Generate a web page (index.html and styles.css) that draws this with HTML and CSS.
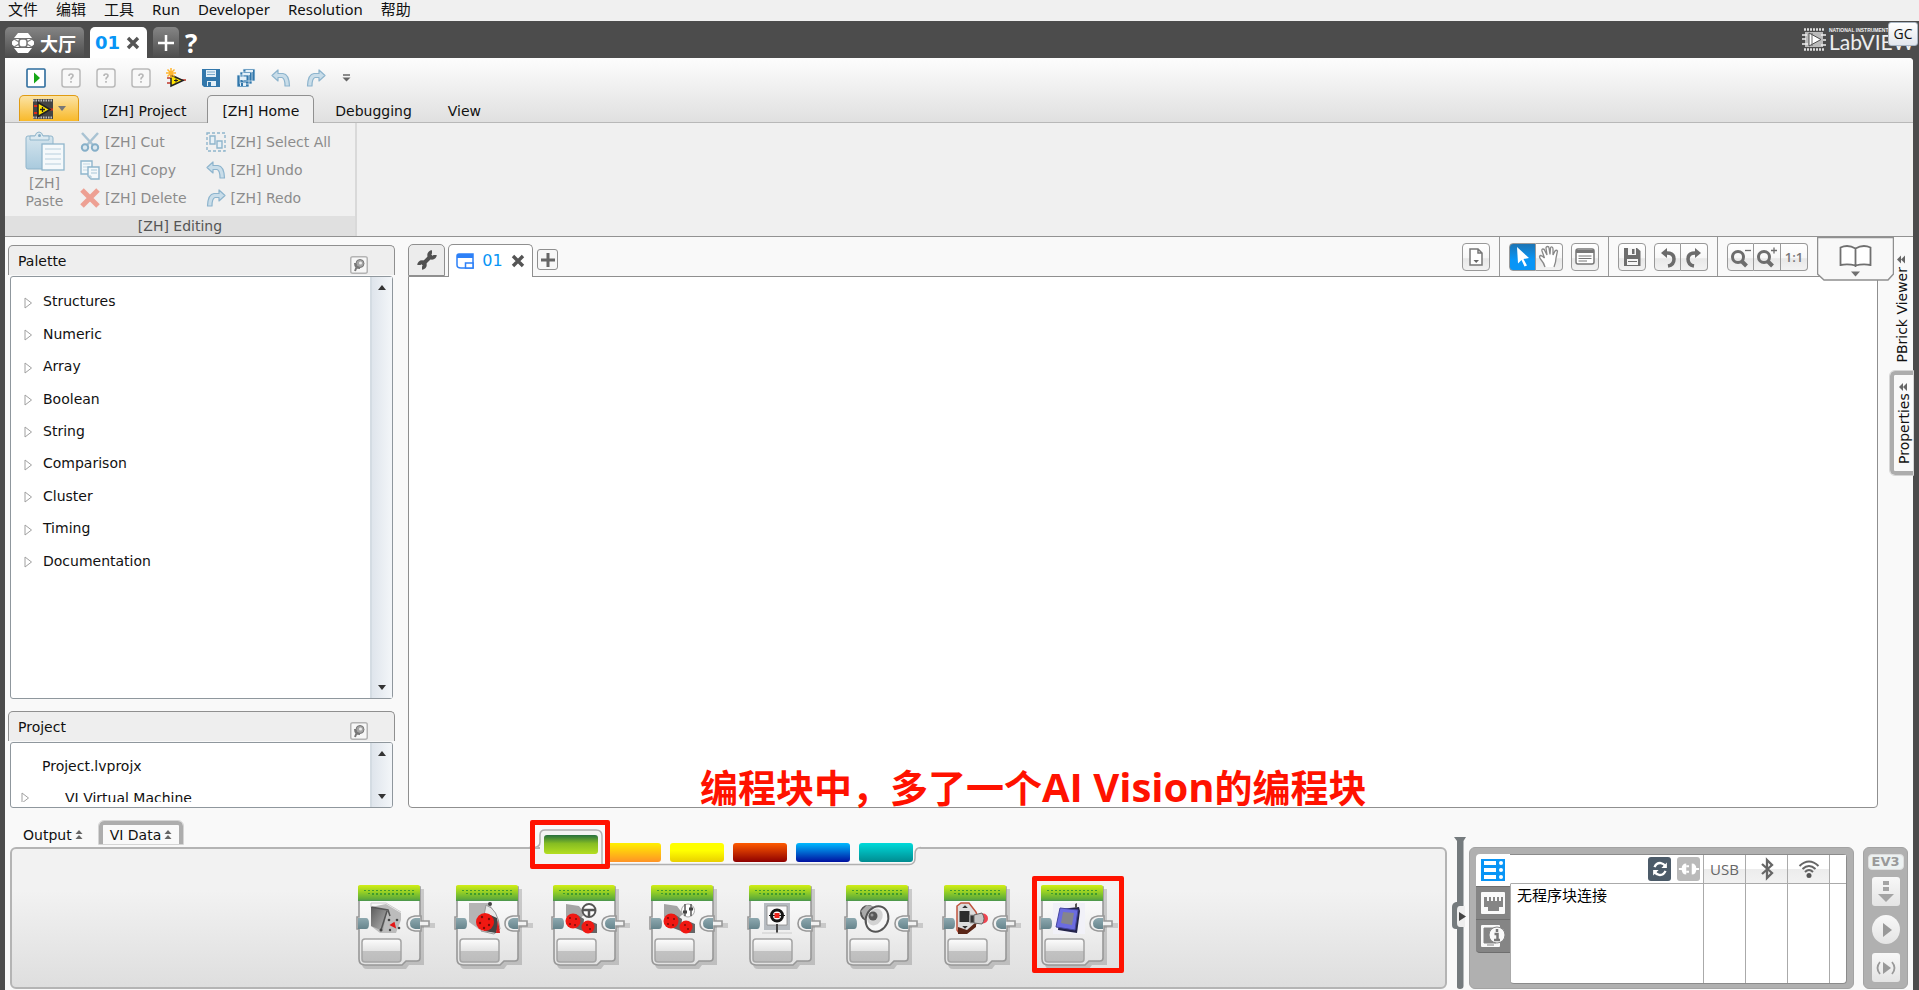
FILE: index.html
```html
<!DOCTYPE html>
<html lang="zh">
<head>
<meta charset="utf-8">
<title>LabVIEW - 01</title>
<link rel="stylesheet" href="styles.css">
</head>
<body>
<svg class="defs" aria-hidden="true">
  <defs>
    <linearGradient id="gTop" x1="0" y1="0" x2="0" y2="1"><stop offset="0" stop-color="#d3ee14"/><stop offset=".5" stop-color="#8dcb28"/><stop offset=".85" stop-color="#62ad38"/><stop offset="1" stop-color="#4a9550"/></linearGradient>
    <linearGradient id="gBody" x1="0" y1="0" x2="0" y2="1"><stop offset="0" stop-color="#fff"/><stop offset="1" stop-color="#e2e2e2"/></linearGradient>
    <linearGradient id="gSlot" x1="0" y1="0" x2="0" y2="1"><stop offset="0" stop-color="#fdfdfd"/><stop offset=".5" stop-color="#e4e4e4"/><stop offset=".52" stop-color="#c2c2c2"/><stop offset="1" stop-color="#bcbcbc"/></linearGradient>
    <linearGradient id="gPlug" x1="0" y1="0" x2="0" y2="1"><stop offset="0" stop-color="#8ea9b0"/><stop offset="1" stop-color="#66848c"/></linearGradient>
    <linearGradient id="gMetal" x1="0" y1="0" x2="1" y2="1"><stop offset="0" stop-color="#5c5c5c"/><stop offset="1" stop-color="#b5b5b5"/></linearGradient>
    <linearGradient id="gBlue" x1="0" y1="0" x2="0" y2="1"><stop offset="0" stop-color="#d5e5ee"/><stop offset="1" stop-color="#a9cadd"/></linearGradient>
    <pattern id="dots" width="4" height="4" patternUnits="userSpaceOnUse"><rect width="2" height="2" fill="#3f9b2c"/></pattern>
    <symbol id="block" viewBox="0 0 80 86">
      <path d="M6 4H68V80H53L50 84H11Q6 84 6 78Z" fill="#000" opacity=".16"/>
      <path d="M3 2H64V73Q64 76 61 76H50L46 80H9Q3 80 3 74V44H1V32H3Z" fill="url(#gBody)" stroke="#989898" stroke-width="1.600"/>
      <path d="M2 2Q2 0 4 0H62Q64 0 64 2V16H2Z" fill="url(#gTop)"/>
      <path d="M8 5h52v6H16V9h-4V7H8z" fill="url(#dots)"/>
      <path d="M2 33H10Q13 33 13 38.500T10 44H2Z" fill="url(#gPlug)"/>
      <path d="M53 38h26v5H53z" fill="#000" opacity=".14"/>
      <path d="M59 31H65V36H73V41H65V46H59Q51 45 51 38.500T59 31Z" fill="#f2f2f2" stroke="#989898" stroke-width="1.600"/>
      <path d="M64 33H59Q54 34 54 38.500T59 44H64Z" fill="url(#gPlug)"/>
      <rect x="6" y="54" width="39" height="23" rx="3" fill="url(#gSlot)" stroke="#a4a4a4" stroke-width="1.500"/>
    </symbol>
    <symbol id="undo" viewBox="0 0 20 20"><path d="M1 7.500L7 2V5.500H12Q18 6 18.500 18H14Q14 10.500 11 9.500H7V13Z" fill="#c9dde9" stroke="#8db4cd" stroke-width="1.200" stroke-linejoin="round"/></symbol>
    <symbol id="mystery" viewBox="0 0 20 20"><rect x="1" y="1" width="18" height="18" rx="2.500" fill="#f8f8f8" stroke="#b9b9b9" stroke-width="1.500"/><path d="M8 8q0-2 2-2t2 1.700q0 1-1.200 1.800Q10 10 10 11.500M10 13v1.800" fill="none" stroke="#b8b8b8" stroke-width="1.700"/></symbol>
    <symbol id="cross" viewBox="0 0 14 14"><path d="M2 2L12 12M12 2L2 12" fill="none" stroke="currentColor" stroke-width="3.400"/></symbol>
    <symbol id="pin" viewBox="0 0 18 18"><rect x=".75" y=".75" width="16.500" height="16.500" rx="2" fill="#f7f7f7" stroke="#b4b4b4" stroke-width="1.500"/><circle cx="10" cy="7.500" r="4" fill="#a5a5a5" stroke="#777"/><circle cx="10.500" cy="7" r="1.500" fill="#eee"/><path d="M5 7Q5 12 10 12M7 10L5 15" fill="none" stroke="#777" stroke-width="2"/></symbol>
    <symbol id="branch" viewBox="0 0 9 12"><path d="M1 1L7.500 6L1 11Z" fill="#fff" stroke="#a0a0a0"/></symbol>
    <symbol id="stack" viewBox="0 0 8 10"><path d="M4 0L7.500 4H.5ZM4 5L7.500 9H.5Z" fill="#666"/></symbol>
    <symbol id="turn" viewBox="0 0 26 26"><path d="M10 9H12Q19 9 19 15T13 22" fill="none" stroke="#6b6b6b" stroke-width="3.500"/><path d="M6 9L12 4V14Z" fill="#6b6b6b"/></symbol>
    <symbol id="lens" viewBox="0 0 26 26"><circle cx="10" cy="13" r="5.500" fill="none" stroke="#6d6d6d" stroke-width="3"/><path d="M13.500 17L18.500 22" stroke="#6d6d6d" stroke-width="4"/></symbol>
    <symbol id="vi" viewBox="0 0 20 20"><path d="M1 7H6M1 14H6M13 10.500H20" stroke="#e02d16" stroke-width="2"/><path d="M5 3.500L17 10.500L5 17.500Z" fill="#ffe400" stroke="#222" stroke-width="1.600"/><path d="M7 10.500H12M9.500 8V13" stroke="#222" stroke-width="1.300"/></symbol>
  </defs>
</svg>

<nav class="menubar">
  <button>文件</button><button>编辑</button><button>工具</button><button>Run</button><button>Developer</button><button>Resolution</button><button>帮助</button>
</nav>

<header class="titlebar">
  <button class="doc lobby"><svg width="22" height="20" viewBox="0 0 22 20"><path d="M6 0H16L20 5H2ZM6 20H16L20 15H2ZM0 8.500L3 6H19L22 8.500V11.500L19 14H3L0 11.500Z" fill="#fff"/><path d="M2 6L7 9M20 6L15 9M2 14L7 11M20 14L15 11" stroke="#808080" stroke-width="1.200"/><rect x="7" y="6" width="8" height="8" rx="2.500" fill="#fff" stroke="#777" stroke-width="1.500"/></svg>大厅</button>
  <button class="doc current">01<svg width="14" height="14"><use href="#cross"/></svg></button>
  <button class="doc add" aria-label="New"><svg width="16" height="16" viewBox="0 0 16 16"><path d="M8 0V16M0 8H16" stroke="#fff" stroke-width="2.500"/></svg></button>
  <button class="help">?</button>
  <div class="brand">
    <svg width="24" height="23" viewBox="0 0 24 23"><path d="M2 1.500H22M2 21.500H22" stroke="#ddd" stroke-width="2.500" stroke-dasharray="2 1"/><rect x="3" y="4" width="18" height="15" fill="#bbb"/><path d="M0 7H5M0 11H4M0 16H6M19 7H24M21 12H24M19 17H24" stroke="#eee" stroke-width="1.500"/><path d="M7 5L19 11.500L7 18Z" fill="#fff" stroke="#4c4c4c"/><path d="M10 5V18" stroke="#666"/></svg>
    <div class="brand-text"><small>NATIONAL INSTRUMENTS</small><span>LabVIEW</span></div>
    <button class="gc">GC</button>
  </div>
</header>

<div class="frame">
  <div class="ribbon-top">
    <div class="quick">
      <button aria-label="Run"><svg viewBox="0 0 20 20"><rect x="1" y="1" width="18" height="18" rx="1" fill="#fff" stroke="#2d6c9d" stroke-width="1.600"/><path d="M8 4.500L14 10L8 15.500Z" fill="#16a716"/></svg></button>
      <button aria-label="Item 1"><svg><use href="#mystery"/></svg></button>
      <button aria-label="Item 2"><svg><use href="#mystery"/></svg></button>
      <button aria-label="Item 3"><svg><use href="#mystery"/></svg></button>
      <button aria-label="New VI"><svg viewBox="0 0 20 20"><path d="M1 10H5M1 15H5M14 12H20" stroke="#c0392b" stroke-width="1.500"/><path d="M5 7L17 12.500L5 18Z" fill="#ffe400" stroke="#222" stroke-width="1.500"/><path d="M8 12.500H12M10 10.500V14.500" stroke="#222"/><path d="M5 0V10M0 5H10M1.500 1.500L8.500 8.500M8.500 1.500L1.500 8.500" stroke="#ffb52e" stroke-width="1.500"/></svg></button>
      <button aria-label="Save"><svg viewBox="0 0 20 20"><path d="M1 1H19V19H3L1 17Z" fill="#3277ab"/><path d="M5 2H15V9H5ZM6 13H15V18H6Z" fill="#e4f0f8"/><path d="M6 4H14M6 6.500H14" stroke="#78a8cb"/><rect x="7" y="14" width="3" height="4" fill="#3277ab"/></svg></button>
      <button aria-label="Save All"><svg viewBox="0 0 20 20"><path d="M7 1H19V13H7ZM4 4H16V16H4ZM1 7H13V19H1Z" fill="#3277ab" stroke="#e6f0f7" stroke-width=".7"/><path d="M9.500 2H17V4H9.500ZM6.500 5H14V7H6.500ZM4 8.500H10.500V12H4ZM4 14.500H10V18H4Z" fill="#e4f0f8"/><path d="M5 15H7V18H5Z" fill="#3277ab"/></svg></button>
      <button aria-label="Undo"><svg><use href="#undo"/></svg></button>
      <button aria-label="Redo"><svg class="flip"><use href="#undo"/></svg></button>
      <button aria-label="More"><svg viewBox="0 0 20 20"><path d="M2 7H9" stroke="#666" stroke-width="1.500"/><path d="M1.500 9.500H9.500L5.500 13.500Z" fill="#666"/></svg></button>
    </div>
    <nav class="ribbon-tabs">
      <button class="app" aria-label="Application"><svg width="20" height="20" viewBox="0 0 20 20"><rect width="20" height="20" fill="#444"/><path d="M0 1.500H20M0 18.500H20" stroke="#bbb" stroke-width="2" stroke-dasharray="1.500 1"/><use href="#vi"/></svg><svg width="8" height="5"><path d="M0 0H8L4 5Z" fill="#777"/></svg></button>
      <button>[ZH] Project</button><button class="on">[ZH] Home</button><button>Debugging</button><button>View</button>
    </nav>
  </div>

  <section class="ribbon">
    <div class="group">
      <div class="group-body">
        <button class="paste"><svg width="40" height="40" viewBox="0 0 40 40"><rect x="1" y="5" width="27" height="33" rx="2" fill="url(#gBlue)" stroke="#90b5cb"/><path d="M5 9V5H10Q11 1 14 1T18 5H24V9Z" fill="#dce9f0" stroke="#90b5cb"/><circle cx="14.500" cy="4.500" r="1.500" fill="#86aec6"/><rect x="17" y="13" width="22" height="26" fill="#f5f9fb" stroke="#90b5cb" stroke-width="1.300"/><path d="M20 18H36M20 23H36M20 28H36M20 33H36" stroke="#b8cfdd"/></svg><span>[ZH]<br>Paste</span></button>
        <div class="col">
          <button><svg viewBox="0 0 20 20"><path d="M2 1L13 13M18 1L7 13" stroke="#a9c3d3" stroke-width="2.500"/><circle cx="5" cy="15.500" r="3.200" fill="#dce8ef" stroke="#86afc8" stroke-width="2"/><circle cx="15" cy="15.500" r="3.200" fill="#dce8ef" stroke="#86afc8" stroke-width="2"/></svg>[ZH] Cut</button>
          <button><svg viewBox="0 0 20 20"><path d="M1 1H12V14H1Z" fill="#f3f8fa" stroke="#8fb5cc" stroke-width="1.400"/><path d="M3 4H10M3 7H10M3 10H10" stroke="#c1d5e1"/><path d="M8 7H19V19H11L8 16Z" fill="#f3f8fa" stroke="#8fb5cc" stroke-width="1.400"/><path d="M8 16H11V19M11 10H17M11 13H17" fill="none" stroke="#a8c6d7"/></svg>[ZH] Copy</button>
          <button><svg viewBox="0 0 20 20"><path d="M2 2L18 18M18 2L2 18" stroke="#eda093" stroke-width="5"/></svg>[ZH] Delete</button>
        </div>
        <div class="col">
          <button><svg viewBox="0 0 20 20"><rect x="1" y="1" width="18" height="18" fill="none" stroke="#8fb5cc" stroke-width="1.400" stroke-dasharray="3 2"/><path d="M4 4H9V12H4ZM11 9H16V16H11Z" fill="#e8f1f6" stroke="#8fb5cc" stroke-width="1.400"/></svg>[ZH] Select All</button>
          <button><svg><use href="#undo"/></svg>[ZH] Undo</button>
          <button><svg class="flip"><use href="#undo"/></svg>[ZH] Redo</button>
        </div>
      </div>
      <div class="group-title">[ZH] Editing</div>
    </div>
  </section>

  <main class="work">
    <aside class="left">
      <section class="panel grow">
        <h2>Palette<button aria-label="Pin Palette"><svg width="18" height="18"><use href="#pin"/></svg></button></h2>
        <div class="panel-body">
          <ul class="tree">
            <li><svg><use href="#branch"/></svg>Structures</li><li><svg><use href="#branch"/></svg>Numeric</li><li><svg><use href="#branch"/></svg>Array</li><li><svg><use href="#branch"/></svg>Boolean</li><li><svg><use href="#branch"/></svg>String</li><li><svg><use href="#branch"/></svg>Comparison</li><li><svg><use href="#branch"/></svg>Cluster</li><li><svg><use href="#branch"/></svg>Timing</li><li><svg><use href="#branch"/></svg>Documentation</li>
          </ul>
          <div class="scroll"><button aria-label="Scroll up"><svg width="8" height="5"><path d="M4 0L8 5H0Z" fill="#333"/></svg></button><button aria-label="Scroll down"><svg width="8" height="5"><path d="M0 0H8L4 5Z" fill="#333"/></svg></button></div>
        </div>
      </section>
      <section class="panel">
        <h2>Project<button aria-label="Pin Project"><svg width="18" height="18"><use href="#pin"/></svg></button></h2>
        <div class="panel-body short">
          <div class="project"><p>Project.lvprojx</p><p class="vm"><svg><use href="#branch"/></svg>VI Virtual Machine</p></div>
          <div class="scroll"><button aria-label="Scroll up"><svg width="8" height="5"><path d="M4 0L8 5H0Z" fill="#333"/></svg></button><button aria-label="Scroll down"><svg width="8" height="5"><path d="M0 0H8L4 5Z" fill="#333"/></svg></button></div>
        </div>
      </section>
    </aside>

    <section class="editor">
      <div class="editor-bar">
        <button class="wrench" aria-label="Settings"><svg width="20" height="20" viewBox="0 0 20 20"><path d="M5 15L15 5" stroke="#505050" stroke-width="4"/><path d="M18 5A3 3 0 1 1 15 2M2 15A3 3 0 1 1 5 18" fill="none" stroke="#505050" stroke-width="3.500"/></svg></button>
        <button class="file"><svg width="18" height="17" viewBox="0 0 18 17"><path d="M1 3Q1 1 3 1H17V15H5Q1 15 1 12Z" fill="#fff" stroke="#2d80f7" stroke-width="1.500"/><path d="M1 1H17V5H1Z" fill="#2d80f7"/><rect x="9.500" y="10" width="7.500" height="5" fill="#fff" stroke="#2d80f7" stroke-width="1.500"/></svg>01<svg class="x" width="14" height="14"><use href="#cross"/></svg></button>
        <button class="plus" aria-label="New tab"><svg width="14" height="14" viewBox="0 0 14 14"><path d="M7 0V14M0 7H14" stroke="#666" stroke-width="3"/></svg></button>
        <div class="tools">
          <div class="cell"><button aria-label="Document"><svg viewBox="0 0 26 26"><path d="M7 5H15L19 9V21H7ZM15 5V9H19" fill="#fff" stroke="#777" stroke-width="1.500"/><path d="M10.500 16H16L13.200 19Z" fill="#666"/></svg></button></div>
          <div class="cell">
            <div class="seg"><button class="active" aria-label="Select"><svg viewBox="0 0 26 26"><path d="M7 3L19 14L13.500 15L17 21.500L14.500 22.500L11.500 16L8 19.500Z" fill="#fff"/></svg></button><button aria-label="Pan"><svg viewBox="0 0 26 26"><path d="M9 23Q8 19 4.500 15Q2.500 12 4.500 11.500Q6 11.500 8.500 14L6 7Q5.500 5 7 5T9 7L11 11L10 4Q10 2.500 11.500 2.500T13 4L14 10.500L14.500 4Q15 2.500 16 3T17 5L17 11L19 7Q20.500 5.500 21.500 7L20 14Q20 18 18 23" fill="#fff" stroke="#888" stroke-width="1.300"/></svg></button></div>
            <button aria-label="Comment"><svg viewBox="0 0 26 26"><rect x="4" y="5" width="18" height="15" rx="2" fill="#fff" stroke="#777" stroke-width="1.500"/><path d="M4 7.500H22" stroke="#777" stroke-width="3"/><path d="M6.500 12H19.500M6.500 14.500H19.500M6.500 17H15" stroke="#777"/></svg></button>
          </div>
          <div class="cell">
            <button aria-label="Save"><svg viewBox="0 0 26 26"><path d="M5 4H18L21.500 7V22H5Z" fill="#6d6d6d"/><path d="M9 4H17V11H9ZM8 15H19V21H8Z" fill="#f5f5f5"/><path d="M13 5H15.500V10H13ZM9 17H18V18H9Z" fill="#6d6d6d"/></svg></button>
            <div class="seg"><button aria-label="Undo"><svg><use href="#turn"/></svg></button><button aria-label="Redo"><svg class="flip"><use href="#turn"/></svg></button></div>
          </div>
          <div class="cell">
            <div class="seg"><button aria-label="Zoom out"><svg viewBox="0 0 26 26"><use href="#lens"/><path d="M17 6.500H23" stroke="#6d6d6d" stroke-width="1.300"/></svg></button><button aria-label="Zoom in"><svg viewBox="0 0 26 26"><use href="#lens"/><path d="M17 6.500H23M20 3.500V9.500" stroke="#6d6d6d" stroke-width="1.300"/></svg></button><button class="one">1:1</button></div>
          </div>
          <button class="book" aria-label="Content editor"><svg width="77" height="44" viewBox="0 0 77 44"><path d="M.5 .5H76.500V37L71 43H7L.5 37Z" fill="#f8f8f8" stroke="#8f8f8f" stroke-width="1.500"/><path d="M38.500 11.500Q31 7 23.500 10.500V28Q31 26.500 38.500 28.500Q46 26.500 53.500 28V10.500Q46 7 38.500 11.500ZM38.500 11.500V30" fill="#fff" stroke="#707070" stroke-width="1.800"/><path d="M34 34.500H43L38.500 39.500Z" fill="#707070"/></svg></button>
        </div>
      </div>
      <div class="canvas"><p class="note">编程块中，多了一个<span>AI Vision</span>的编程块</p></div>
    </section>

    <nav class="side">
      <button>PBrick Viewer<svg width="8" height="10"><path d="M0 1L4 5L0 9ZM4 1L8 5L4 9Z" fill="#666"/></svg></button>
      <button class="boxed">Properties<svg width="8" height="10"><path d="M0 1L4 5L0 9ZM4 1L8 5L4 9Z" fill="#666"/></svg></button>
    </nav>
  </main>

  <footer class="bottom">
    <div class="programming">
      <nav class="dock"><button>Output<svg width="8" height="10"><use href="#stack"/></svg></button><button class="boxed">VI Data<svg width="8" height="10"><use href="#stack"/></svg></button></nav>
      <section class="blocks">
        <nav class="categories">
          <svg class="outline" width="392" height="38" viewBox="0 0 392 38"><path d="M0 19H7Q11 18 11 13V6Q11 1 16 1H67Q73 1 73 7V36H380Q386 36 386 29V25Q387 19 392 19V17H386V0H0Z" fill="#f9f9f9"/><path d="M11 14V6Q11 1 16 1H67Q73 1 73 7V36H11Z" fill="#f4f4f4"/><path d="M0 18.500H5Q11 18 11 13V6Q11 1 16 1H67Q73 1 73 7V35.500H380Q386 35.500 386 29V25Q386 18.500 392 18.500" fill="none" stroke="#b0b0b0" stroke-width="1.500"/></svg>
          <button class="green" aria-label="Action"></button><button class="orange" aria-label="Flow"></button><button class="yellow" aria-label="Sensor"></button><button class="red" aria-label="Data"></button><button class="blue" aria-label="Advanced"></button><button class="teal" aria-label="My blocks"></button>
          <span class="mark"></span>
        </nav>
        <ul class="shelf">
          <li><svg viewBox="0 0 80 86"><use href="#block"/><path d="M15 22L30 19L45 28V35L40 48H24L15 41Z" fill="#bcbcbc"/><path d="M15 22L31 25L27 46L15 41Z" fill="url(#gMetal)"/><path d="M15 22L32 25L34 31M31 26L25 45" fill="none" stroke="#555" stroke-width="1.500"/><path d="M15 22V18H30L45 27" fill="none" stroke="#ccc"/><path d="M35 40L39 42L38 38Z" fill="#e31616" stroke="#e31616" stroke-width="1.500"/><g fill="#444"><circle cx="33" cy="35" r="1.300"/><circle cx="41" cy="35" r="1.300"/><circle cx="43" cy="43" r="1.300"/><circle cx="25" cy="45" r="1.500"/><circle cx="34" cy="45" r="1.200"/></g></svg></li>
          <li><svg viewBox="0 0 80 86"><use href="#block"/><path d="M15 18H35L41 28L26 45L15 37Z" fill="#b5b5b5"/><path d="M32 20Q44 24 46 44L40 49L27 46Z" fill="#e8e8e8" stroke="#999"/><path d="M34 29L43 33Q45 41 42 48L30 46Z" fill="#444"/><path d="M44 35L46 48H42Z" fill="#d52020"/><circle cx="31" cy="37" r="9" fill="#f01812"/><circle cx="36" cy="19" r="2" fill="#444"/><g fill="#7a0d0a"><circle cx="28" cy="32" r="1.200"/><circle cx="35" cy="34" r="1.200"/><circle cx="26" cy="38" r="1.200"/><circle cx="30" cy="43" r="1.200"/><circle cx="35" cy="40" r="1.200"/></g></svg></li>
          <li><svg viewBox="0 0 80 86"><use href="#block"/><path d="M15 19L28 21L34 29L24 38L15 32Z" fill="#a5a5a5"/><path d="M25 29L33 34L32 46L24 43ZM39 36L46 39V48H38Z" fill="#666"/><circle cx="22" cy="36" r="7.500" fill="#f01812"/><circle cx="37" cy="42" r="6.500" fill="#f01812"/><g fill="#7a0d0a"><circle cx="19" cy="33" r="1"/><circle cx="25" cy="34" r="1"/><circle cx="19" cy="39" r="1"/><circle cx="24" cy="40" r="1"/><circle cx="36" cy="40" r="1"/><circle cx="39" cy="44" r="1"/></g><circle cx="38" cy="25.500" r="6.500" fill="#fff" stroke="#555" stroke-width="2"/><path d="M31 25H45M38 26V32" stroke="#555" stroke-width="2.500"/></svg></li>
          <li><svg viewBox="0 0 80 86"><use href="#block"/><path d="M15 19L28 21L34 29L24 38L15 32Z" fill="#a5a5a5"/><path d="M25 29L33 34L32 46L24 43ZM39 36L46 39V48H38Z" fill="#666"/><circle cx="22" cy="36" r="7.500" fill="#f01812"/><circle cx="37" cy="42" r="6.500" fill="#f01812"/><g fill="#7a0d0a"><circle cx="19" cy="33" r="1"/><circle cx="25" cy="34" r="1"/><circle cx="19" cy="39" r="1"/><circle cx="24" cy="40" r="1"/><circle cx="36" cy="40" r="1"/><circle cx="39" cy="44" r="1"/></g><circle cx="39" cy="25.500" r="6.500" fill="#fff" stroke="#aaa"/><path d="M36 19V31M42 19V31" stroke="#555" stroke-width="1.500"/><path d="M34 27H38M40 24H44" stroke="#444" stroke-width="3"/></svg></li>
          <li><svg viewBox="0 0 80 86"><use href="#block"/><path d="M17 18H43V45H17Z" fill="#b6bbc0"/><path d="M20 21H40V40H20Z" fill="#fafafa" stroke="#888" stroke-width=".8"/><circle cx="30" cy="30.500" r="5.500" fill="#fff" stroke="#151515" stroke-width="3"/><path d="M22 30.500H38" stroke="#151515"/><rect x="27.500" y="28" width="5" height="5" fill="#ee251c"/><path d="M30 39V48" stroke="#444" stroke-width="2"/><path d="M15 48H45" stroke="#ccc"/></svg></li>
          <li><svg viewBox="0 0 80 86"><use href="#block"/><circle cx="24" cy="28" r="7" fill="#aaa" stroke="#555" stroke-width="2"/><path d="M17 26L23 20L31 22L23 39Z" fill="#aaa"/><ellipse cx="33" cy="34" rx="11" ry="13" transform="rotate(25 33 34)" fill="#f6f6f6" stroke="#555" stroke-width="2"/><ellipse cx="31" cy="32" rx="7" ry="9" transform="rotate(35 31 32)" fill="#d2d2d2"/><circle cx="29" cy="31" r="4.500" fill="#585858"/><circle cx="28" cy="30" r="1.500" fill="#999"/></svg></li>
          <li><svg viewBox="0 0 80 86"><use href="#block"/><path d="M15 21L19 18H27L34 27L36 33L33 41L24 48H17L15 45Z" fill="#ddd" stroke="#bf533d" stroke-width="1.500"/><path d="M16 42L25 45L34 37V42L25 49H16Z" fill="#5a2618"/><rect x="17.500" y="26" width="10" height="11" fill="#2c2c2c"/><path d="M28 30H34V38H28ZM20 23L23 20L26 23M20 41L23 44L26 41" fill="#333" stroke="#aaa"/><circle cx="41" cy="33.500" r="5" fill="#f04450"/><path d="M32 30L40 28Q44 34 40 39L32 38Z" fill="#c8c8c8" stroke="#666"/></svg></li>
          <li><span class="mark"></span><svg viewBox="0 0 80 86"><use href="#block"/><path d="M14 18H46V49H14Z" fill="#f1f1f8"/><path d="M21 24L40 22L41 26L38 48L19 45Z" fill="#24244a"/><path d="M21 23L39 25L36 45L17 42Z" fill="#6b6ce0" stroke="#4546a0"/><path d="M24 27L35 28L33 40L22 38Z" fill="#85858c"/><path d="M36 19L38 18V23H36Z" fill="#555"/></svg></li>
        </ul>
      </section>
    </div>

    <button class="splitter" aria-label="Collapse"><svg width="16" height="152" viewBox="0 0 16 152"><path d="M3 0H15L12.500 4V149Q12.500 152 9 152T6 149V4Z" fill="#757b7e"/><path d="M6 65H5Q1 66 1 70V88Q1 92 5 92H12V66Z" fill="#757b7e"/><path d="M14 69H9Q6 69 6 73V86Q6 90 9 90H14Z" fill="#eee"/><path d="M8 75L15 79.500L8 84Z" fill="#444"/></svg></button>

    <section class="brick">
      <nav class="brick-tabs">
        <button class="on" aria-label="Available bricks"><svg viewBox="0 0 24 24"><rect y="1" width="24" height="22" fill="#0895f6"/><g fill="#fff"><rect x="3" y="3" width="12" height="4"/><rect x="3" y="10" width="12" height="4"/><rect x="3" y="17" width="12" height="4"/><circle cx="20" cy="5" r="2"/><circle cx="20" cy="12" r="2"/><circle cx="20" cy="19" r="2"/></g></svg></button>
        <button aria-label="Port view"><svg viewBox="0 0 24 24"><rect y="1" width="24" height="22" rx="1" fill="#fafafa"/><path d="M3 6H6V10H8V6H10V10H12V6H14V10H16V6H18V10H20V6H22V16H18V20H7V16H3Z" fill="#858585"/></svg></button>
        <button aria-label="Brick information"><svg viewBox="0 0 24 24"><rect y="1" width="19" height="22" rx="1" fill="#fafafa"/><path d="M3 4H15V19H3ZM6 21H13" fill="#858585" stroke="#858585"/><circle cx="16" cy="11" r="8" fill="#fafafa" stroke="#858585"/><path d="M16 5V8M13.500 10H16.500V16M13 16H19" fill="none" stroke="#777" stroke-width="2.500"/></svg></button>
      </nav>
      <table>
        <thead><tr>
          <th class="name"><span class="acts"><button class="refresh" aria-label="Refresh"><svg viewBox="0 0 24 24"><path d="M6 10Q8 5 13 5.500Q16 6 18 9M18 14Q16 19 11 18.500Q8 18 6 15" fill="none" stroke="#fff" stroke-width="2.500"/><path d="M19.500 5V11H13.500ZM4.500 19V13H10.500Z" fill="#fff"/></svg></button><button class="connect" aria-label="Disconnect"><svg viewBox="0 0 24 24"><path d="M1 12H5M19 12H23M9 9H12M9 15H12" stroke="#fff" stroke-width="2"/><path d="M9 6V18Q4 18 4 12T9 6ZM15 6V18Q20 18 20 12T15 6Z" fill="#fff"/></svg></button></span></th>
          <th>USB</th>
          <th><svg width="14" height="24" viewBox="0 0 14 24"><path d="M2 7L12 16L7 21V3L12 8L2 17" fill="none" stroke="#666" stroke-width="2.300"/></svg></th>
          <th><svg width="22" height="20" viewBox="0 0 22 20"><path d="M1.500 7Q11-2 20.500 7M4.500 10Q11 4 17.500 10M7 13Q11 9 15 13" fill="none" stroke="#666" stroke-width="2"/><circle cx="11" cy="16.500" r="2.500" fill="#555"/></svg></th>
          <th class="end"></th>
        </tr></thead>
        <tbody><tr><td>无程序块连接</td><td></td><td></td><td></td><td></td></tr></tbody>
      </table>
    </section>

    <nav class="ev3">
      <span class="ev3-logo">EV3</span>
      <button aria-label="Download"><svg viewBox="0 0 28 28"><path d="M11 3H17V7H11ZM11 9H17V13H11ZM6 16H22L14 24Z" fill="#a4a4a4"/></svg></button>
      <button class="round" aria-label="Download and run"><svg viewBox="0 0 28 28"><path d="M11 7L20 14L11 21Z" fill="#999"/></svg></button>
      <button aria-label="Run selected"><svg viewBox="0 0 28 28"><path d="M11 8L19 14L11 20Z" fill="#999"/><path d="M8 8Q3 14 8 20M20 8Q25 14 20 20" fill="none" stroke="#999" stroke-width="1.800"/></svg></button>
    </nav>
  </footer>
</div>
</body>
</html>
```
FILE: styles.css
```css
* { box-sizing: border-box; }
body {
  margin: 0;
  min-height: 100vh;
  display: flex;
  flex-direction: column;
  background: #4c4c4c;
  color: #111;
  font: 14px/18px "DejaVu Sans", "Noto Sans CJK SC", sans-serif;
}
button {
  display: flex;
  align-items: center;
  justify-content: center;
  padding: 0;
  border: 0;
  background: none;
  color: inherit;
  font: inherit;
  white-space: nowrap;
}
svg { display: block; flex: none; }
ul, p, h2 { margin: 0; padding: 0; list-style: none; font: inherit; }
.defs { position: absolute; width: 0; height: 0; }
.flip { transform: scaleX(-1); }

.menubar {
  display: flex;
  align-items: flex-start;
  gap: 18px;
  height: 21px;
  padding-left: 8px;
  background: #f0f0f0;
  font: 15px/19px "Noto Sans", "Noto Sans CJK SC", sans-serif;
}

.titlebar {
  display: flex;
  align-items: flex-end;
  gap: 6px;
  height: 37px;
  padding: 0 6px 0 5px;
}
.doc {
  height: 31px;
  border-radius: 5px 5px 0 0;
  background: linear-gradient(#858585, #4c4c4c);
  color: #fff;
  font: bold 18px/24px "Noto Sans CJK SC", sans-serif;
}
.lobby { gap: 6px; padding: 0 8px 0 7px; }
.current {
  gap: 6px;
  padding: 0 7px 0 5px;
  background: #fff;
  color: #0895f6;
  font-family: "DejaVu Sans", sans-serif;
}
.current svg { color: #555; }
.add { width: 26px; }
.help { height: 31px; color: #fff; font: bold 26px/28px "Open Sans", sans-serif; }
.brand {
  position: relative;
  display: flex;
  gap: 3px;
  margin: 0 0 7px auto;
  color: #eee;
}
.brand-text { width: 84px; font: 21px/18px Lato, sans-serif; }
.brand-text small { display: block; font: bold 5px/5px "Liberation Sans", sans-serif; white-space: nowrap; }
.gc {
  position: absolute;
  top: -6px;
  right: -5px;
  width: 30px;
  height: 24px;
  border: 1px solid #a9b6c4;
  border-radius: 3px;
  background: linear-gradient(#fff, #e2e6ec);
  color: #111;
  font: 14px/18px "Open Sans", sans-serif;
}

.frame {
  flex: 1;
  display: flex;
  flex-direction: column;
  margin: 0 6px 0 5px;
  border-radius: 0 4px 0 0;
  background: #f9f9f9;
}
.ribbon-top {
  display: flex;
  flex-direction: column;
  height: 65px;
  border-bottom: 1px solid #b8b8b8;
  border-radius: 0 4px 0 0;
  background: linear-gradient(#fdfdfd, #e0e0e0);
}
.quick { display: flex; gap: 15px; height: 38px; padding: 3px 21px 0; align-items: center; }
.quick svg { width: 20px; height: 20px; }
.ribbon-tabs { display: flex; gap: 6px; height: 27px; padding: 0 14px; }
.ribbon-tabs button {
  padding: 3px 14px 0;
  border: 1px solid transparent;
  border-bottom: 0;
  border-radius: 5px 5px 0 0;
}
.ribbon-tabs .on { margin-bottom: -1px; border-color: #909090; background: #f0f0f0; }
.ribbon-tabs .app {
  gap: 5px;
  width: 60px;
  height: 26px;
  margin-right: 3px;
  padding: 0;
  border-color: #e09b12;
  background: linear-gradient(#fbe3a4, #f8b92a);
}
.ribbon { border-bottom: 1px solid #929292; background: #f0f0f0; color: #8c8c8c; }
.group { width: 352px; border-right: 2px solid #d9d9d9; }
.group-body { display: flex; gap: 10px; height: 93px; padding: 7px 14px 0; }
.paste { flex-direction: column; gap: 3px; width: 51px; height: 80px; }
.paste span { line-height: 18px; }
.col { display: flex; flex-direction: column; gap: 5px; }
.col button { justify-content: flex-start; gap: 5px; height: 23px; }
.col svg { width: 20px; height: 20px; }
.col + .col { margin-left: 9px; }
.group-title { height: 20px; background: #e0e0e0; color: #555; line-height: 20px; text-align: center; }

.work { flex: 1; display: flex; min-height: 560px; }
.left { display: flex; flex-direction: column; gap: 12px; width: 387px; margin: 8px 13px 0 3px; }
.panel { display: flex; flex-direction: column; }
.grow { flex: 1; }
.panel h2 {
  display: flex;
  justify-content: space-between;
  height: 30px;
  padding: 6px 26px 0 9px;
  border: 1px solid #8f8f8f;
  border-bottom: 0;
  border-radius: 5px 5px 0 0;
  background: #eee;
}
.panel h2 button { height: 26px; }
.panel-body {
  flex: 1;
  display: flex;
  margin: 1px 2px 0;
  border: 1px solid #8f979d;
  border-radius: 3px;
  background: #fff;
}
.short { height: 66px; flex: none; overflow: hidden; }
.tree { flex: 1; align-self: flex-start; display: grid; grid-auto-rows: 1fr; min-height: 292px; margin-top: 8px; padding-left: 13px; }
.tree li { display: flex; align-items: center; gap: 10px; }
.tree svg, .vm svg { width: 9px; height: 12px; }
.tree svg { margin-top: 3px; }
.scroll {
  display: flex;
  flex-direction: column;
  justify-content: space-between;
  width: 22px;
  padding: 8px 0;
  border-left: 2px solid #d4dce3;
  background: linear-gradient(90deg, #dfe5ec, #f3f6f9);
}
.project { flex: 1; height: 59px; padding: 14px 0 0 31px; overflow: hidden; }
.project p + p { margin-top: 14px; }
.project .vm { display: flex; align-items: center; gap: 35px; margin-left: -21px; }

.editor { flex: 1; display: flex; flex-direction: column; min-width: 0; }
.editor-bar { display: flex; align-items: flex-end; height: 39px; margin-right: -16px; }
.editor-bar > button { border: 1px solid #8f8f8f; }
.wrench { width: 37px; height: 32px; border-radius: 5px 5px 0 0; background: #ececec; }
.editor-bar > .file {
  position: relative;
  z-index: 1;
  gap: 8px;
  width: 85px;
  height: 33px;
  margin: 0 4px -1px 3px;
  border-bottom: 0;
  border-radius: 5px 5px 0 0;
  background: #fff;
  color: #0895f6;
  font-size: 16px;
}
.file .x { color: #555; }
.editor-bar > .plus { width: 21px; height: 21px; margin-bottom: 6px; border-radius: 3px; background: #f7f7f7; }
.tools { display: flex; height: 39px; margin-left: auto; }
.cell { display: flex; gap: 8px; align-items: flex-start; height: 39px; padding: 6px 9px 0; }
.cell + .cell { border-left: 1px solid #999; }
.tools .cell button {
  width: 28px;
  height: 28px;
  border: 1px solid #999;
  border-radius: 4px;
  background: linear-gradient(#fff, #f7f7f7 55%, #e8e8e8 56%, #f2f2f2);
}
.seg { display: flex; }
.tools .seg button { width: 27px; border-radius: 0; }
.tools .seg button + button { border-left: 0; }
.tools .seg button:first-child { border-radius: 4px 0 0 4px; }
.tools .seg button:last-child { border-radius: 0 4px 4px 0; }
.tools .seg .active { background: linear-gradient(#1c74b4, #0895f6 60%); }
.cell svg { width: 26px; height: 26px; }
.tools .one { color: #777; font: 600 13px/16px "Open Sans", sans-serif; }
.book { position: relative; z-index: 2; align-self: flex-start; }
.canvas { position: relative; flex: 1; border: 1px solid #8f8f8f; border-radius: 0 0 4px 4px; background: #fff; }
.note {
  position: absolute;
  left: 291px;
  bottom: 0;
  color: #ff1200;
  font: bold 38px/40px "Open Sans", "Noto Sans CJK SC", sans-serif;
  white-space: nowrap;
}
.note span { font-size: 40px; line-height: 38px; }
.side { display: flex; flex-direction: column; align-items: flex-end; gap: 8px; width: 35px; padding-top: 18px; }
.side button {
  gap: 2px;
  width: 23px;
  padding: 0 2px;
  writing-mode: vertical-rl;
  transform: rotate(180deg);
}
.side .boxed {
  padding: 4px 2px;
  height: 104px;
  border: 4px solid #adadad;
  border-left: 0;
  border-radius: 0 5px 5px 0;
  outline: 1px solid #d5d5d5;
}

.bottom { display: flex; align-items: flex-end; padding: 12px 5px 1px; }
.programming { flex: 1; min-width: 0; }
.dock { display: flex; align-items: flex-end; gap: 16px; height: 24px; margin-bottom: 3px; padding-left: 13px; }
.dock button { gap: 3px; }
.dock .boxed {
  height: 23px;
  padding: 0 7px;
  border: 4px solid #adadad;
  border-bottom: 0;
  border-radius: 5px 5px 0 0;
  outline: 1px solid #d5d5d5;
}
.blocks {
  height: 142px;
  border: 2px solid #b4b4b4;
  border-radius: 6px;
  background: linear-gradient(#f2f2f2 30%, #dedede);
}
.categories {
  position: relative;
  display: flex;
  gap: 9px;
  width: 392px;
  height: 38px;
  margin: -20px 0 0 517px;
  padding: 14px 0 0 15px;
}
.outline { position: absolute; inset: 0; }
.categories button { position: relative; width: 54px; height: 19px; border-radius: 3px; }
.categories .green { top: -8px; background: linear-gradient(#27703f, #86bd22 45%, #b4de20); }
.orange { background: linear-gradient(#fff000, #ff9326); }
.yellow { background: linear-gradient(#ffff00 40%, #e9cf00); }
.red { background: linear-gradient(#ff5a00, #8e0000); }
.blue { background: linear-gradient(#00baff, #0010a0); }
.teal { background: linear-gradient(#00dada, #008b90); }
.mark { position: absolute; border: 5px solid #ff1200; border-radius: 2px; }
.categories .mark { top: -9px; left: 1px; width: 80px; height: 49px; }
.shelf {
  display: grid;
  grid-template-columns: repeat(8, 1fr);
  width: 781px;
  max-width: 100%;
  margin: 18px auto 0;
  padding-left: 0;
  position: relative;
  left: 18px;
}
.shelf li { position: relative; }
.shelf svg { width: 80px; height: 86px; }
.shelf .mark { top: -9px; left: -7px; width: 92px; height: 97px; }

.splitter { width: 16px; margin: 0 2px 0 4px; }
.brick {
  display: flex;
  width: 385px;
  height: 142px;
  padding: 6px 6px 4px;
  border: 1px solid #a3a3a3;
  border-radius: 6px;
  background: #b0b0b0;
}
.brick-tabs { display: flex; flex-direction: column; width: 34px; }
.brick-tabs button { height: 33px; border-bottom: 1px solid #6e6e6e; background: #858585; }
.brick-tabs button:last-child { border-radius: 0 0 0 4px; }
.brick-tabs .on { border-radius: 4px 0 0 0; background: #fff; }
.brick-tabs svg { width: 24px; height: 24px; }
.brick table {
  flex: 1;
  height: 130px;
  border: 1px solid #8b8b8b;
  border-left: 0;
  border-radius: 0 4px 4px 4px;
  border-spacing: 0;
  table-layout: fixed;
  width: 337px;
  background: #fff;
}
.brick th, .brick td { width: 42px; padding: 0; border-left: 1px solid #aaa; }
.brick th { height: 29px; border-bottom: 1px solid #aaa; background: linear-gradient(#fff 50%, #ececec 51%, #f2f2f2); color: #666; font: 15px/20px "Open Sans", sans-serif; }
.brick th svg { margin: auto; }
.brick .name { width: auto; background: #fff; border-left-color: #fff; }
.brick .end { width: 17px; background: #fff; }
.brick td { vertical-align: top; }
.brick td:first-child { padding: 1px 6px; font: 15px/20px "Noto Sans CJK SC", sans-serif; color: #000; }
.acts { display: flex; justify-content: flex-end; gap: 6px; padding-right: 3px; }
.acts button { width: 23px; height: 24px; border-radius: 3px; }
.acts svg { width: 22px; height: 22px; }
.refresh { background: #4c5b69; }
.connect { background: #bababa; }
.ev3 {
  display: flex;
  flex-direction: column;
  align-items: center;
  gap: 9px;
  width: 45px;
  height: 142px;
  margin-left: 9px;
  padding-top: 6px;
  border: 1px solid #a3a3a3;
  border-radius: 6px;
  background: #b0b0b0;
}
.ev3-logo {
  width: 36px;
  height: 16px;
  margin-bottom: -2px;
  border: 1px solid #ddd;
  border-radius: 4px;
  background: #ecf1f1;
  color: #999;
  font: bold 13px/14px "DejaVu Sans", sans-serif;
  text-align: center;
}
.ev3 button { width: 28px; height: 29px; border-radius: 3px; background: linear-gradient(#f8f8f8, #e4e4e4); }
.ev3 .round { border-radius: 50%; }
.ev3 svg { width: 28px; height: 28px; }
```
